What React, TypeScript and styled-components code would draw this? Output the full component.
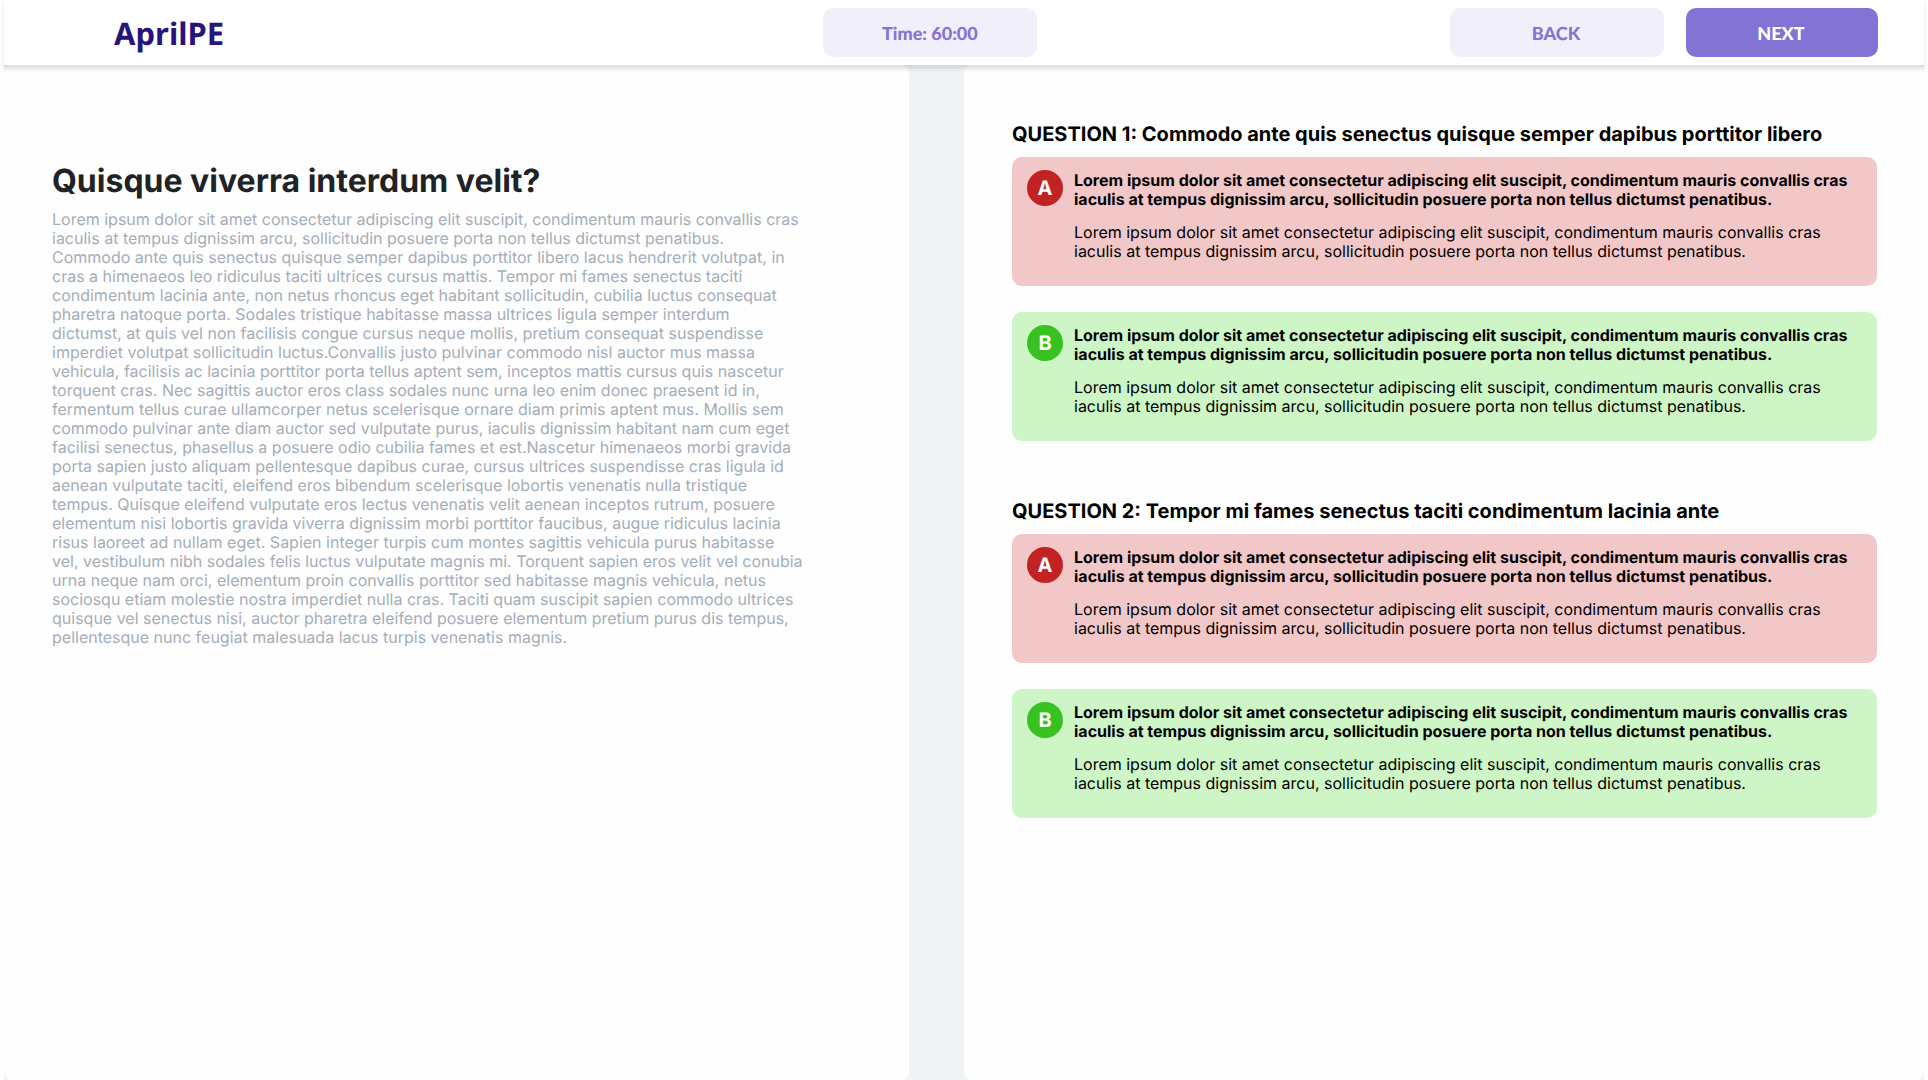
import React from "react";
import styled, { createGlobalStyle } from "styled-components";

const GlobalStyle = createGlobalStyle`
  * {
    box-sizing: border-box;
  }

  body {
    margin: 0;
    background: #ffffff;
    color: #000000;
    font-family: Inter, "Liberation Sans", sans-serif;
    font-size: 16px;
    line-height: 19px;
    text-rendering: geometricPrecision;
  }
`;

const Page = styled.div`
  display: flex;
  flex-direction: column;
  min-height: 100vh;
  padding: 0 4px;
`;

const Header = styled.header`
  position: relative;
  z-index: 1;
  display: grid;
  grid-template-columns: minmax(0, 12fr) 214px minmax(0, 13fr);
  align-items: center;
  padding: 8px 0;
  background: #ffffff;
  box-shadow: 0 4px 4px rgba(0, 0, 0, 0.12);
`;

const Logo = styled.a`
  padding: 3px 0 0 110px;
  color: #27157c;
  font-family: "Noto Sans", "Open Sans", sans-serif;
  font-size: 31px;
  font-weight: 700;
  line-height: 40px;
  text-decoration: none;
`;

const Timer = styled.div`
  padding: 13px 0 12px;
  border-radius: 10px;
  background: #f1effa;
  color: #8273d5;
  font-family: Lato, sans-serif;
  font-size: 18px;
  font-weight: 900;
  line-height: 24px;
  text-align: center;
`;

const Actions = styled.nav`
  display: flex;
  justify-content: flex-end;
  gap: 22px;
  padding-right: 46px;
`;

const ActionButton = styled.button<{ $primary?: boolean }>`
  width: ${({ $primary }) => ($primary ? "192px" : "214px")};
  padding: 13px 2px 12px 0;
  border: 0;
  border-radius: 10px;
  background: ${({ $primary }) => ($primary ? "#8273d5" : "#f1effa")};
  color: ${({ $primary }) => ($primary ? "#ffffff" : "#8273d5")};
  font-family: Lato, sans-serif;
  font-size: 18px;
  font-weight: 900;
  line-height: 24px;
  text-rendering: inherit;
  cursor: pointer;
`;

const Columns = styled.main`
  flex: 1;
  display: grid;
  grid-template-columns: minmax(0, 905fr) minmax(0, 960fr);
  gap: 55px;
  background: #f0f4f7;
`;

const Panel = styled.section`
  border-radius: 8px;
  background: #fefefe;
`;

const PassagePanel = styled(Panel)`
  padding: 96px 48px 40px;
`;

const QuestionsPanel = styled(Panel)`
  display: flex;
  flex-direction: column;
  gap: 58px;
  padding: 57px 47px 40px 48px;
`;

const PassageTitle = styled.h1`
  margin: 0 0 10px;
  color: #212226;
  font-size: 32px;
  font-weight: 700;
  line-height: 39px;
`;

const PassageText = styled.p`
  margin: 0;
  color: #a5adb8;
  white-space: pre-line;
`;

const QuestionTitle = styled.h2`
  margin: 0 0 11px;
  font-size: 20px;
  font-weight: 700;
  line-height: 24px;
`;

const AnswerList = styled.ul`
  display: flex;
  flex-direction: column;
  gap: 26px;
  margin: 0;
  padding: 0;
  list-style: none;
`;

const Answer = styled.li<{ $correct: boolean }>`
  display: flex;
  align-items: flex-start;
  gap: 11px;
  padding: 13px 15px 25px;
  border-radius: 10px;
  background: ${({ $correct }) => ($correct ? "#cdf5c6" : "#f2c7c8")};
`;

const Letter = styled.span<{ $correct: boolean }>`
  flex: none;
  width: 36px;
  border-radius: 50%;
  background: ${({ $correct }) => ($correct ? "#37c222" : "#c32222")};
  color: #ffffff;
  font-size: 20px;
  font-weight: 700;
  line-height: 36px;
  text-align: center;
`;

const AnswerBody = styled.div`
  flex: 1;
  display: flex;
  flex-direction: column;
  gap: 14px;
  padding-top: 1px;
`;

const AnswerLead = styled.strong`
  font-weight: 700;
`;

const AnswerDetail = styled.p`
  margin: 0;
`;

const passage = `Lorem ipsum dolor sit amet consectetur adipiscing elit suscipit, condimentum mauris convallis cras
iaculis at tempus dignissim arcu, sollicitudin posuere porta non tellus dictumst penatibus.
Commodo ante quis senectus quisque semper dapibus porttitor libero lacus hendrerit volutpat, in
cras a himenaeos leo ridiculus taciti ultrices cursus mattis. Tempor mi fames senectus taciti
condimentum lacinia ante, non netus rhoncus eget habitant sollicitudin, cubilia luctus consequat
pharetra natoque porta. Sodales tristique habitasse massa ultrices ligula semper interdum
dictumst, at quis vel non facilisis congue cursus neque mollis, pretium consequat suspendisse
imperdiet volutpat sollicitudin luctus.Convallis justo pulvinar commodo nisl auctor mus massa
vehicula, facilisis ac lacinia porttitor porta tellus aptent sem, inceptos mattis cursus quis nascetur
torquent cras. Nec sagittis auctor eros class sodales nunc urna leo enim donec praesent id in,
fermentum tellus curae ullamcorper netus scelerisque ornare diam primis aptent mus. Mollis sem
commodo pulvinar ante diam auctor sed vulputate purus, iaculis dignissim habitant nam cum eget
facilisi senectus, phasellus a posuere odio cubilia fames et est.Nascetur himenaeos morbi gravida
porta sapien justo aliquam pellentesque dapibus curae, cursus ultrices suspendisse cras ligula id
aenean vulputate taciti, eleifend eros bibendum scelerisque lobortis venenatis nulla tristique
tempus. Quisque eleifend vulputate eros lectus venenatis velit aenean inceptos rutrum, posuere
elementum nisi lobortis gravida viverra dignissim morbi porttitor faucibus, augue ridiculus lacinia
risus laoreet ad nullam eget. Sapien integer turpis cum montes sagittis vehicula purus habitasse
vel, vestibulum nibh sodales felis luctus vulputate magnis mi. Torquent sapien eros velit vel conubia
urna neque nam orci, elementum proin convallis porttitor sed habitasse magnis vehicula, netus
sociosqu etiam molestie nostra imperdiet nulla cras. Taciti quam suscipit sapien commodo ultrices
quisque vel senectus nisi, auctor pharetra eleifend posuere elementum pretium purus dis tempus,
pellentesque nunc feugiat malesuada lacus turpis venenatis magnis.`;

const answerText =
  "Lorem ipsum dolor sit amet consectetur adipiscing elit suscipit, condimentum mauris convallis cras iaculis at tempus dignissim arcu, sollicitudin posuere porta non tellus dictumst penatibus.";

const answers = [
  { letter: "A", correct: false },
  { letter: "B", correct: true },
];

const questions = [
  "QUESTION 1: Commodo ante quis senectus quisque semper dapibus porttitor libero",
  "QUESTION 2: Tempor mi fames senectus taciti condimentum lacinia ante",
];

export default function App() {
  return (
    <>
      <GlobalStyle />
      <Page>
        <Header>
          <Logo href="#">AprilPE</Logo>
          <Timer role="timer">Time: 60:00</Timer>
          <Actions>
            <ActionButton type="button">BACK</ActionButton>
            <ActionButton type="button" $primary>
              NEXT
            </ActionButton>
          </Actions>
        </Header>
        <Columns>
          <PassagePanel>
            <PassageTitle>Quisque viverra interdum velit?</PassageTitle>
            <PassageText>{passage}</PassageText>
          </PassagePanel>
          <QuestionsPanel>
            {questions.map((title) => (
              <article key={title}>
                <QuestionTitle>{title}</QuestionTitle>
                <AnswerList>
                  {answers.map(({ letter, correct }) => (
                    <Answer key={letter} $correct={correct}>
                      <Letter $correct={correct}>{letter}</Letter>
                      <AnswerBody>
                        <AnswerLead>{answerText}</AnswerLead>
                        <AnswerDetail>{answerText}</AnswerDetail>
                      </AnswerBody>
                    </Answer>
                  ))}
                </AnswerList>
              </article>
            ))}
          </QuestionsPanel>
        </Columns>
      </Page>
    </>
  );
}
